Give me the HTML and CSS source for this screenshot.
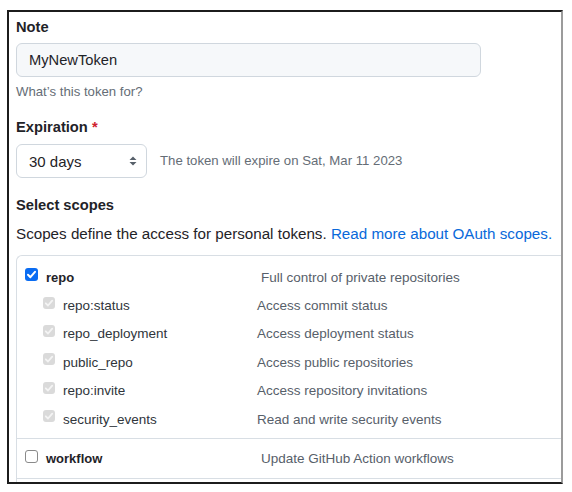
FILE: index.html
```html
<!DOCTYPE html>
<html lang="en">
<head>
<meta charset="utf-8">
<title>New personal access token</title>
<link rel="stylesheet" href="styles.css">
</head>
<body>
<div class="frame">
  <label class="label">Note</label>
  <div class="input">MyNewToken</div>
  <p class="hint">What’s this token for?</p>

  <label class="label label-exp">Expiration <span class="req">*</span></label>
  <div class="exp-row">
    <div class="select">
      <span>30 days</span>
      <svg class="updown" width="8" height="10" viewBox="0 0 8 10"><path d="M4 0.5 L7.5 4 L0.5 4 Z M4 9.5 L7.5 6 L0.5 6 Z" fill="#57606a"/></svg>
    </div>
    <span class="exp-note">The token will expire on Sat, Mar 11 2023</span>
  </div>

  <h3 class="label scopes-title">Select scopes</h3>
  <p class="scopes-desc">Scopes define the access for personal tokens. <a href="#">Read more about OAuth scopes.</a></p>

  <div class="scopes">
    <div class="group">
      <div class="row top">
        <span class="cb cb-on"><svg width="13" height="13" viewBox="0 0 13 13"><path d="M3 6.8 L5.4 9.2 L10 3.8" fill="none" stroke="#fff" stroke-width="2" stroke-linecap="round" stroke-linejoin="round"/></svg></span>
        <span class="name name-top">repo</span>
        <span class="desc desc-top">Full control of private repositories</span>
      </div>
      <div class="row sub">
        <span class="cb cb-dis"><svg width="12" height="12" viewBox="0 0 12 12"><path d="M2.8 6.3 L5 8.5 L9.2 3.6" fill="none" stroke="#f4f4f4" stroke-width="1.8" stroke-linecap="round" stroke-linejoin="round"/></svg></span>
        <span class="name name-sub">repo:status</span>
        <span class="desc">Access commit status</span>
      </div>
      <div class="row sub">
        <span class="cb cb-dis"><svg width="12" height="12" viewBox="0 0 12 12"><path d="M2.8 6.3 L5 8.5 L9.2 3.6" fill="none" stroke="#f4f4f4" stroke-width="1.8" stroke-linecap="round" stroke-linejoin="round"/></svg></span>
        <span class="name name-sub">repo_deployment</span>
        <span class="desc">Access deployment status</span>
      </div>
      <div class="row sub">
        <span class="cb cb-dis"><svg width="12" height="12" viewBox="0 0 12 12"><path d="M2.8 6.3 L5 8.5 L9.2 3.6" fill="none" stroke="#f4f4f4" stroke-width="1.8" stroke-linecap="round" stroke-linejoin="round"/></svg></span>
        <span class="name name-sub">public_repo</span>
        <span class="desc">Access public repositories</span>
      </div>
      <div class="row sub">
        <span class="cb cb-dis"><svg width="12" height="12" viewBox="0 0 12 12"><path d="M2.8 6.3 L5 8.5 L9.2 3.6" fill="none" stroke="#f4f4f4" stroke-width="1.8" stroke-linecap="round" stroke-linejoin="round"/></svg></span>
        <span class="name name-sub">repo:invite</span>
        <span class="desc">Access repository invitations</span>
      </div>
      <div class="row sub">
        <span class="cb cb-dis"><svg width="12" height="12" viewBox="0 0 12 12"><path d="M2.8 6.3 L5 8.5 L9.2 3.6" fill="none" stroke="#f4f4f4" stroke-width="1.8" stroke-linecap="round" stroke-linejoin="round"/></svg></span>
        <span class="name name-sub">security_events</span>
        <span class="desc">Read and write security events</span>
      </div>
    </div>
    <div class="group group-wf">
      <div class="row top wf">
        <span class="cb cb-off"></span>
        <span class="name name-top">workflow</span>
        <span class="desc desc-top">Update GitHub Action workflows</span>
      </div>
    </div>
    <div class="group group-next"></div>
  </div>
</div>
</body>
</html>
```

FILE: styles.css
```css
* { box-sizing: border-box; }

html, body {
  margin: 0;
  padding: 0;
  background: #ffffff;
}

body {
  font-family: "Liberation Sans", Arial, sans-serif;
  color: #1f2328;
}

.frame {
  margin: 10px 0 0 7px;
  width: 556px;
  height: 474px;
  border: 2px solid #1c1c1c;
  border-right-color: #9b9b9b;
  padding: 5px 0 0 7px;
  overflow: hidden;
  background: #ffffff;
}

.label {
  display: block;
  margin: 0;
  font-size: 14.7px;
  font-weight: bold;
  line-height: 20px;
  color: #1f2328;
}

.input {
  margin-top: 6px;
  width: 465px;
  height: 34px;
  display: flex;
  align-items: center;
  padding-left: 12px;
  background: #f6f8fa;
  border: 1px solid #d0d7de;
  border-radius: 6px;
  font-size: 14.7px;
  color: #1f2328;
}

.hint {
  margin: 6px 0 0;
  font-size: 13.2px;
  line-height: 18px;
  color: #656d76;
}

.label-exp { margin-top: 16px; }

.req { color: #cf222e; }

.exp-row {
  margin-top: 7px;
  display: flex;
  align-items: center;
  gap: 13px;
}

.select {
  width: 131px;
  height: 34px;
  display: flex;
  align-items: center;
  justify-content: space-between;
  padding: 0 9px 0 12px;
  border: 1px solid #d0d7de;
  border-radius: 6px;
  background: #ffffff;
  font-size: 15px;
  color: #1f2328;
}

.updown { display: block; }

.exp-note {
  font-size: 13.2px;
  line-height: 18px;
  color: #656d76;
}

.scopes-title { margin-top: 17px; }

.scopes-desc {
  margin: 9px 0 0;
  font-size: 15.2px;
  line-height: 20px;
  white-space: nowrap;
  color: #1f2328;
}

.scopes-desc a {
  color: #0969da;
  text-decoration: none;
}

.scopes {
  margin-top: 11px;
  width: 700px;
  border-top: 1px solid #d8dee4;
  border-left: 1px solid #d8dee4;
  border-top-left-radius: 6px;
}

.group {
  border-bottom: 1px solid #d8dee4;
}

.group:first-child {
  padding-top: 7.5px;
  padding-bottom: 4px;
}

.group-next { height: 40px; border-bottom: none; }

.row {
  display: flex;
  align-items: center;
  line-height: 28.4px;
  white-space: nowrap;
}

.row.top { padding-left: 8px; }
.row.sub { padding-left: 26px; }
.row.wf { line-height: 39px; }

.cb {
  flex: none;
  display: flex;
  align-items: center;
  justify-content: center;
  border-radius: 3px;
}

.cb-on {
  width: 13px;
  height: 13px;
  background: #0a6cf2;
  margin-bottom: 6px;
}

.cb-dis {
  width: 12px;
  height: 12px;
  background: #dadada;
  margin-bottom: 7px;
}

.cb-off {
  width: 13px;
  height: 13px;
  border: 1px solid #8a8a8a;
  background: #ffffff;
  margin-bottom: 4px;
}

.name {
  flex: none;
  margin-left: 8px;
  color: #1f2328;
}

.name-top {
  width: 215px;
  font-size: 13px;
  font-weight: bold;
}

.name-sub {
  width: 194px;
  font-size: 13.5px;
  color: #2f353b;
}

.desc {
  font-size: 13.5px;
  color: #57606a;
}
```
